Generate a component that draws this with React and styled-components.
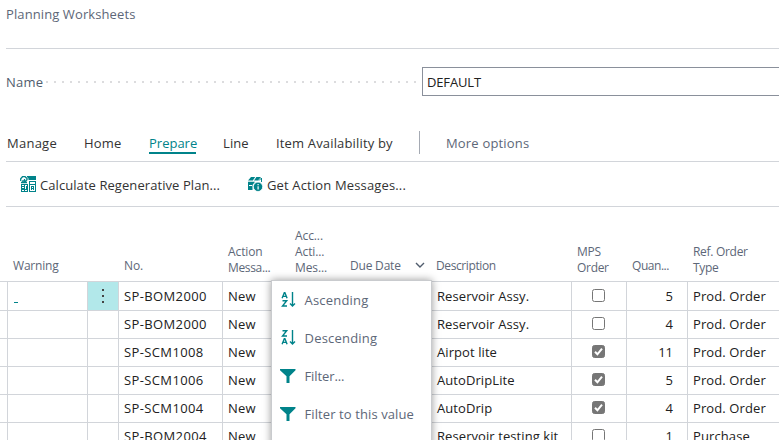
import React from 'react'
import styled, { createGlobalStyle, css } from 'styled-components'

const teal = '#00838a'
const line = '#d2d5da'
const muted = '#5d6778'

const GlobalStyle = createGlobalStyle`
  * {
    box-sizing: border-box;
  }

  body {
    margin: 0;
    overflow: hidden;
    background: #fff;
    color: #212121;
    font-family: 'Open Sans', 'Noto Sans', sans-serif;
    font-size: 13px;
  }
`

const Page = styled.div`
  width: 779px;
  height: 440px;
  overflow: hidden;
  position: relative;
`

const Text = styled.span`
  display: inline-block;
  white-space: pre;
  letter-spacing: ${props => props.$track || 0}px;
`

const TitleBar = styled.header`
  height: 49px;
  margin-left: 6px;
  padding-top: 5px;
  border-bottom: 1px solid ${line};
  color: ${muted};
  line-height: 19px;
`

const Field = styled.div`
  display: flex;
  align-items: center;
  height: 29px;
  margin: 18px 0 0 6px;
`

const FieldLabel = styled.label`
  display: flex;
  align-items: center;
  width: 416px;
  color: #505c6d;
`

const Dots = styled.span`
  flex: 1;
  height: 2px;
  margin: 1px 6px 0 3px;
  background: repeating-linear-gradient(
    to right,
    #dcdcde 0,
    #dcdcde 2px,
    transparent 2px,
    transparent 8px
  );
`

const FieldValue = styled.div`
  flex: 1;
  height: 29px;
  padding-left: 4px;
  border: 1px solid #8a909b;
  border-right: 0;
  line-height: 28px;
`

const Tabs = styled.nav`
  display: flex;
  height: 66px;
  margin-left: 6px;
  padding: 35px 0 0 1px;
  border-bottom: 1px solid ${line};
`

const Tab = styled.div`
  height: 23px;
  margin-right: ${props => props.$gap || 0}px;
  width: ${props => props.$width}px;
  color: ${props => props.$color || '#333'};
  line-height: 24px;

  ${props =>
    props.$active &&
    css`
      color: ${teal};
      border-bottom: 2px solid ${teal};
    `}
`

const Divider = styled.div`
  width: 1px;
  height: 23px;
  margin: 0 26px 0 0;
  background: #a5aab3;
`

const Actions = styled.div`
  display: flex;
  height: 45px;
  margin-left: 6px;
  padding: 1px 0 0 14px;
  border-bottom: 1px solid ${line};
`

const Action = styled.div`
  display: flex;
  align-items: center;
  gap: 4px;
  width: ${props => props.$width}px;
  color: #333;

  svg {
    flex: none;
    margin-bottom: 2px;
  }
`

const columns = '7px 80px 31px 104px 67px 56px 86px 140px 55px 61px 92px'

const Header = styled.div`
  display: grid;
  grid-template-columns: ${columns};
  align-items: end;
  height: 75px;
  border-bottom: 1px solid ${line};
  color: ${muted};
  font-size: 12px;
  line-height: 16px;
  letter-spacing: -0.1px;
`

const HeaderCell = styled.div`
  display: flex;
  justify-content: space-between;
  padding: 0 6px ${props => (props.$tall ? 5 : 7)}px ${props => props.$left || 6}px;
  white-space: pre;
`

const Row = styled.div`
  display: grid;
  grid-template-columns: ${columns};
  height: 28px;
`

const Cell = styled.div`
  display: flex;
  align-items: center;
  justify-content: ${props => props.$align || 'flex-start'};
  padding: 0 14px 0 6px;
  border-left: 1px solid ${line};
  border-bottom: 1px solid ${line};
  white-space: pre;
  line-height: 27px;
  ${props => props.$text && 'padding: 1px 0 0 5px;'}
  ${props => props.$plain && 'border-left: 0; padding: 0;'}
  ${props => props.$menu && 'padding: 0;'}
  ${props => props.$active && 'background: #b2e8ea;'}
`

const Dash = styled.span`
  width: 4px;
  height: 1px;
  margin-top: 13px;
  background: ${teal};
`

const Check = styled.span`
  display: flex;
  width: 13px;
  height: 13px;
  margin: 0 0 1px 7px;
  border: 1px solid #767676;
  border-radius: 2.5px;
  background: ${props => (props.$on ? '#767676' : '#fff')};

  svg {
    margin: -1px;
    flex: none;
  }
`

const Menu = styled.div`
  position: absolute;
  left: 271px;
  top: 280px;
  width: 161px;
  height: 170px;
  border: 1px solid #c9cbce;
  background: #fff;
  box-shadow: 0 0 8px rgba(0, 0, 0, 0.4);
`

const MenuItem = styled.div`
  display: flex;
  align-items: center;
  gap: 9px;
  height: 38px;
  padding-left: 7.5px;
  color: ${muted};
`

const CalculateIcon = () => (
  <svg width="16" height="16" viewBox="0 0 16 16">
    <path fill={teal} d="M7 0h9v4H8.5V2.5L7 1zM1 8h7v8H1z" />
    <path fill="none" stroke={teal} strokeWidth="1.3" d="M.7 5V2.7L2.5.7h2.6L7 2.5v1.2L4.3 6.5M2.8 7V4.8h1.7V3M1 6.5h6" />
    <path fill="#fff" d="M2 9h2v1H2zM2 11h2v1H2zM5 9h2v1H6v3H5zM2 14h2v1H2zM5 14h2v1H5z" />
    <path fill={teal} d="M9 5h7v11H9z" />
    <path
      fill="#fff"
      d="M10 6h5v2h-5zM10 9h1v6h-1zM14 9h1v6h-1zM10 9h5v1h-5zM12 11h1v1h-1zM12 13h1v1h-1zM10 14h5v1h-5z"
    />
  </svg>
)

const MessagesIcon = () => (
  <svg width="16" height="16" viewBox="0 0 16 16">
    <path fill={teal} d="M4 1h4.2L5.8 4.5H1zM9.4 1H14L11 4.5H7zM1 5.7h7L5.5 9v5H1z" />
    <path fill="none" stroke={teal} d="M12 4.5L14.5 2v4" />
    <path stroke="#fff" d="M2 9.5h3" />
    <circle cx="11" cy="10.8" r="4.7" fill={teal} stroke="#fff" strokeWidth=".8" />
    <path fill="#fff" d="M10.5 8h1.2v1.3h-1.2zM10.5 10.2h1.2v3.2h-1.2z" />
  </svg>
)

const SortIcon = ({ down }) => {
  const a = 'M.6 6.2L2.8.8h.6l2.2 5.4M1.5 4.4h3.2'
  const z = 'M1 .7h4.2L1 6h4.5'
  return (
    <svg width="16" height="18" viewBox="0 0 16 18" fill="none" stroke={teal} strokeWidth="1.4">
      <path transform="translate(1.5 1)" d={down ? z : a} />
      <path transform="translate(1.5 9)" d={down ? a : z} />
      <path d="M12.5 1v14M10 12.5l2.5 2.5 2.5-2.5" />
    </svg>
  )
}

const FilterIcon = () => (
  <svg width="16" height="16" viewBox="0 0 16 16">
    <path fill={teal} d="M0 1h15.5v1.2L9.5 8.2V15h-3V8.2L0 2.2z" />
  </svg>
)

const MoreIcon = () => (
  <svg width="4" height="14" viewBox="0 0 4 14" fill="#444">
    <path d="M1 0h2v2H1zM1 6h2v2H1zM1 12h2v2H1z" />
  </svg>
)

const rows = [
  { no: 'SP-BOM2000', description: 'Reservoir Assy.', quantity: 5, type: 'Prod. Order', active: true },
  { no: 'SP-BOM2000', description: 'Reservoir Assy.', quantity: 4, type: 'Prod. Order' },
  { no: 'SP-SCM1008', description: 'Airpot lite', mps: true, quantity: 11, type: 'Prod. Order' },
  { no: 'SP-SCM1006', description: 'AutoDripLite', mps: true, quantity: 5, type: 'Prod. Order' },
  { no: 'SP-SCM1004', description: 'AutoDrip', mps: true, quantity: 4, type: 'Prod. Order' },
  { no: 'SP-BOM2004', description: 'Reservoir testing kit', quantity: 1, type: 'Purchase' }
]

const WorksheetRow = ({ row }) => (
  <Row>
    <Cell $plain />
    <Cell>{row.active && <Dash />}</Cell>
    <Cell $menu $align="center" $active={row.active}>
      {row.active && <MoreIcon />}
    </Cell>
    <Cell $text>
      <Text $track={0.38}>{row.no}</Text>
    </Cell>
    <Cell $text>
      <Text $track={0.2}>New</Text>
    </Cell>
    <Cell />
    <Cell />
    <Cell $text>
      <Text $track={0.08}>{row.description}</Text>
    </Cell>
    <Cell $align="center">
      <Check $on={row.mps}>
        {row.mps && (
          <svg width="13" height="13" viewBox="0 0 13 13">
            <path d="M3 6.8l2.4 2.5L10 3.6" fill="none" stroke="#fff" strokeWidth="2" />
          </svg>
        )}
      </Check>
    </Cell>
    <Cell $align="flex-end">
      <Text>{row.quantity}</Text>
    </Cell>
    <Cell $text>
      <Text $track={0.1}>{row.type}</Text>
    </Cell>
  </Row>
)

const App = () => (
  <Page>
    <GlobalStyle />
    <TitleBar>
      <Text $track={0.1}>Planning Worksheets</Text>
    </TitleBar>
    <Field>
      <FieldLabel>
        <Text $track={0.2}>Name</Text>
        <Dots />
      </FieldLabel>
      <FieldValue>
        <Text $track={-0.15}>DEFAULT</Text>
      </FieldValue>
    </Field>
    <Tabs>
      <Tab $width={50} $gap={27}>
        <Text $track={0.25}>Manage</Text>
      </Tab>
      <Tab $width={38} $gap={27}>
        <Text $track={0.2}>Home</Text>
      </Tab>
      <Tab $width={47} $gap={27} $active>
        <Text>Prepare</Text>
      </Tab>
      <Tab $width={26} $gap={27}>
        <Text $track={0.1}>Line</Text>
      </Tab>
      <Tab $width={117} $gap={26}>
        <Text $track={0.16}>Item Availability by</Text>
      </Tab>
      <Divider />
      <Tab $width={90} $color={muted}>
        <Text $track={0.18}>More options</Text>
      </Tab>
    </Tabs>
    <Actions>
      <Action $width={227}>
        <CalculateIcon />
        <Text $track={0.07}>Calculate Regenerative Plan...</Text>
      </Action>
      <Action $width={200}>
        <MessagesIcon />
        <Text $track={0.15}>Get Action Messages...</Text>
      </Action>
    </Actions>
    <Header>
      <HeaderCell />
      <HeaderCell>
        <Text $track={-0.2}>Warning</Text>
      </HeaderCell>
      <HeaderCell />
      <HeaderCell>No.</HeaderCell>
      <HeaderCell $tall>
        <Text $track={-0.35}>
          <Text $track={-0.1}>Action</Text>
          {'\nMessa...'}
        </Text>
      </HeaderCell>
      <HeaderCell $tall>{'Acc...\nActi...\nMes...'}</HeaderCell>
      <HeaderCell $left={5}>
        <Text $track={-0.2}>Due Date</Text>
        <svg width="10" height="16" viewBox="0 0 10 16" fill="none" stroke="#505c6d" strokeWidth="1.4">
          <path d="M1 5l4 4 4-4" />
        </svg>
      </HeaderCell>
      <HeaderCell $left={5}>
        <Text $track={-0.4}>Description</Text>
      </HeaderCell>
      <HeaderCell $tall>
        <Text $track={-0.3}>{'MPS\nOrder'}</Text>
      </HeaderCell>
      <HeaderCell>
        <Text $track={-0.45}>Quan...</Text>
      </HeaderCell>
      <HeaderCell $tall>
        <Text $track={-0.3}>{'Ref. Order\nType'}</Text>
      </HeaderCell>
    </Header>
    {rows.map((row, index) => (
      <WorksheetRow key={index} row={row} />
    ))}
    <Menu>
      <MenuItem>
        <SortIcon />
        <Text $track={0.2}>Ascending</Text>
      </MenuItem>
      <MenuItem>
        <SortIcon down />
        <Text $track={0.2}>Descending</Text>
      </MenuItem>
      <MenuItem>
        <FilterIcon />
        <Text $track={-0.1}>Filter...</Text>
      </MenuItem>
      <MenuItem>
        <FilterIcon />
        <Text $track={0.1}>Filter to this value</Text>
      </MenuItem>
    </Menu>
  </Page>
)

export default App
